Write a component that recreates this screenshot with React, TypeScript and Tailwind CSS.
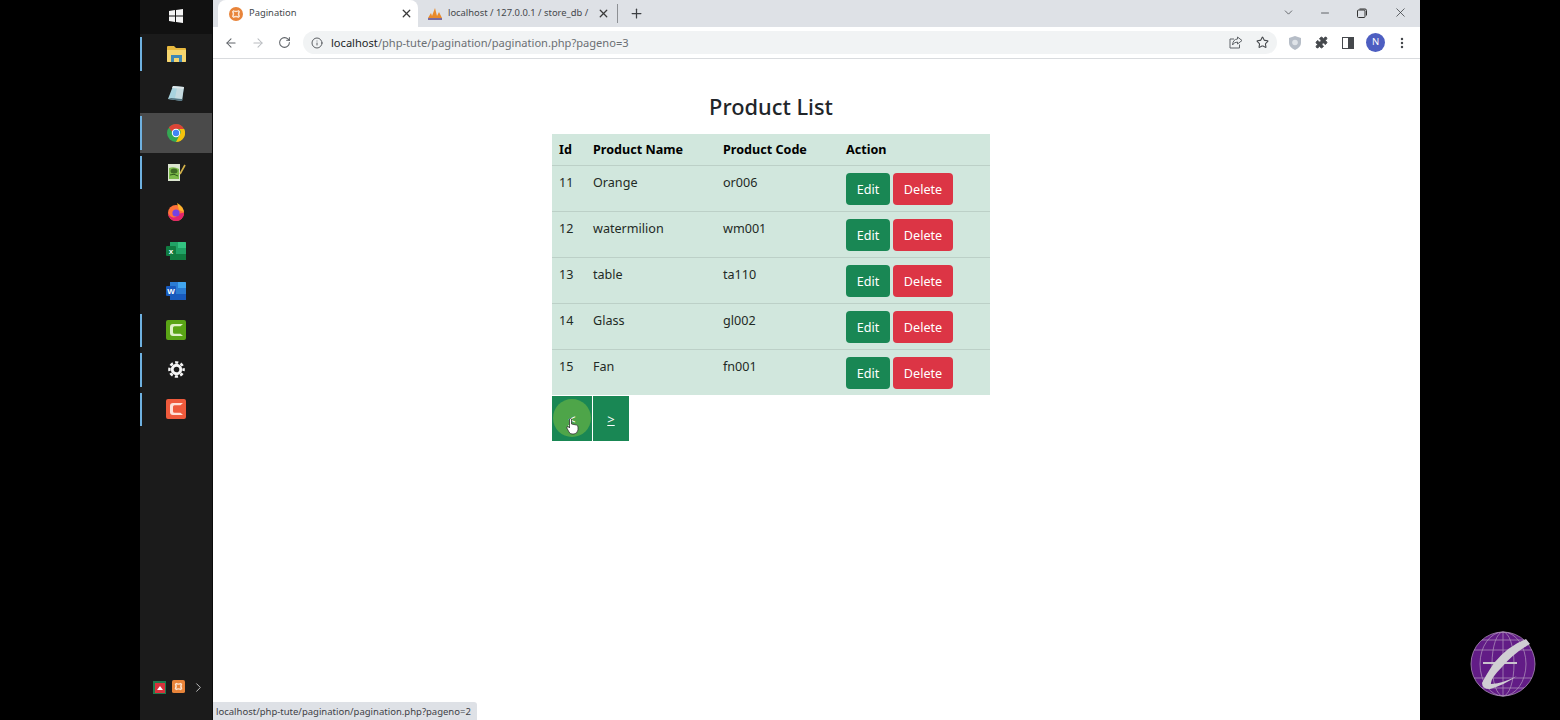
import React from "react";
import { ArrowLeft, ArrowRight, RotateCw, Info, X, Plus, ChevronDown, ChevronRight, Minus, Star, Puzzle, EllipsisVertical } from "lucide-react";

const products = [
  { id: 11, name: "Orange", code: "or006" },
  { id: 12, name: "watermilion", code: "wm001" },
  { id: 13, name: "table", code: "ta110" },
  { id: 14, name: "Glass", code: "gl002" },
  { id: 15, name: "Fan", code: "fn001" },
];

function WindowsLogo() {
  return (
    <svg width="14" height="14" viewBox="0 0 14 14" fill="#f4f4f4">
      <path d="M0 2 L6 1.1 V6.600 H0 Z M7 1 L14 0 V6.600 H7 Z M0 7.400 H6 V12.900 L0 12 Z M7 7.400 H14 V14 L7 13 Z" />
    </svg>
  );
}

function FolderIcon() {
  return (
    <svg width="19" height="16" viewBox="0 0 19 16">
      <path d="M0 1 Q0 0 1 0 H7 L9 2 H18 Q19 2 19 3 V15 Q19 16 18 16 H1 Q0 16 0 15 Z" fill="#e8b93f" />
      <path d="M0 4 H19 V15 Q19 16 18 16 H1 Q0 16 0 15 Z" fill="#f6d66f" />
      <path d="M4 9 H15 V16 H12 V12 H7 V16 H4 Z" fill="#3f88b5" />
    </svg>
  );
}

function NotepadIcon() {
  return (
    <svg width="18" height="18" viewBox="0 0 18 18" className="mt-[1px]">
      <path d="M6 1 L17 2 L15 16 L1 14 Z" fill="#a9d3de" />
      <path d="M6 1 L17 2 L16.500 4 L5 3 Z" fill="#dfe7ea" />
      <path d="M15 16 L1 14 L4 13 L15.500 14 Z" fill="#54727e" />
      <path d="M10 3 L16.500 4 L15 14 L8 13 Z" fill="#d3dde0" opacity="0.7" />
    </svg>
  );
}

function ChromeIcon() {
  return (
    <svg width="18" height="18" viewBox="0 0 18 18">
      <circle cx="9" cy="9" r="9" fill="#34a853" />
      <path d="M9 0 A9 9 0 0 1 17 5 H9 A4 4 0 0 0 5.200 8 L1.800 3.600 A9 9 0 0 1 9 0 Z" fill="#db4437" />
      <path d="M17.200 5 A9 9 0 0 1 9 18 L12.500 11 A4 4 0 0 0 12.200 5 Z" fill="#f4c20d" />
      <circle cx="9" cy="9" r="4.200" fill="#fff" />
      <circle cx="9" cy="9" r="3.200" fill="#4285f4" />
    </svg>
  );
}

function EditorIcon() {
  return (
    <svg width="19" height="19" viewBox="0 0 19 19">
      <path d="M1 1 H13 V18 H1 Z" fill="#dbe5cf" />
      <path d="M2 5 Q7 3 12 6 V16 H2 Z" fill="#7dbb4a" />
      <ellipse cx="7" cy="8" rx="3.500" ry="2.500" fill="#3f6b25" />
      <path d="M3 12 Q7 10 11 13" stroke="#2f5a1a" strokeWidth="1" fill="none" />
      <path d="M13 11 L18 2" stroke="#d3b24a" strokeWidth="1.600" />
    </svg>
  );
}

function FirefoxIcon() {
  return (
    <svg width="18" height="18" viewBox="0 0 18 18">
      <circle cx="9" cy="10" r="8" fill="#ff7139" />
      <path d="M1 10 A8 8 0 0 0 17 10 A8 8 0 0 0 9 14 A6 6 0 0 1 1 10 Z" fill="#e3236f" />
      <path d="M10 0 Q16 3 17 9 L12 7 Z" fill="#ffb32c" />
      <circle cx="9" cy="10" r="3.600" fill="#7542e5" />
    </svg>
  );
}

function OfficeIcon({ letter, dark, mid, light }: { letter: string; dark: string; mid: string; light: string }) {
  return (
    <svg width="20" height="18" viewBox="0 0 20 18">
      <path d="M4 0 H19 Q20 0 20 1 V17 Q20 18 19 18 H5 Q4 18 4 17 Z" fill={mid} />
      <path d="M12 0 H19 Q20 0 20 1 V6 H12 Z" fill={light} />
      <path d="M4 12 H20 V17 Q20 18 19 18 H5 Q4 18 4 17 Z" fill={dark} />
      <rect x="0" y="4" width="10" height="10" rx="1" fill={dark} />
      <text x="5" y="12" textAnchor="middle" fontSize="8" fontWeight="700" fill="#fff" fontFamily="Liberation Sans">{letter}</text>
    </svg>
  );
}

function CamtasiaIcon({ bg, line }: { bg: string; line: string }) {
  return (
    <svg width="20" height="20" viewBox="0 0 20 20">
      <rect width="20" height="20" rx="2" fill={bg} />
      <path d="M17 4 H7 Q4 4 4 7 V13 Q4 16 7 16 H17 L14.500 13.800 H8.500 Q7 13.800 7 12.300 V7.700 Q7 6.200 8.500 6.200 H14.500 Z" fill={line} />
    </svg>
  );
}

function GearIcon() {
  return (
    <svg width="17" height="17" viewBox="0 0 18 18" fill="none" stroke="#f5f5f5">
      <circle cx="9" cy="9" r="4.500" strokeWidth="3" />
      <circle cx="9" cy="9" r="7.500" strokeWidth="2.600" strokeDasharray="3.400 2.490" strokeDashoffset="1.700" />
    </svg>
  );
}

function XamppIcon({ size = 14, round }: { size?: number; round?: boolean }) {
  return (
    <svg width={size} height={size} viewBox="0 0 14 14">
      {round ? <circle cx="7" cy="7" r="7" fill="#e8843a" /> : <rect width="14" height="14" rx="2" fill="#e8843a" />}
      <path d="M4 3.500 Q7 5.500 10 3.500 M4 10.500 Q7 8.500 10 10.500 M3.500 4 Q5.500 7 3.500 10 M10.500 4 Q8.500 7 10.500 10" fill="none" stroke="#fbe5d2" strokeWidth="1.400" />
    </svg>
  );
}

function PmaIcon() {
  return (
    <svg width="14" height="12" viewBox="0 0 14 12">
      <path d="M0 10 L3 5 L4 8 L7 0 L9 8 L11 4 L14 10 Z" fill="#e98a2c" />
      <rect x="0" y="10" width="14" height="2" fill="#7a6a9c" />
    </svg>
  );
}

function DockItem({ children, bar, active }: { children: React.ReactNode; bar?: boolean; active?: boolean }) {
  return (
    <div className={`h-[39.5px] flex items-center justify-center relative ${active ? "bg-[#4a4a4a]" : ""}`}>
      {bar && <div className="absolute left-0 top-[3px] bottom-[3px] w-[2px] bg-[#6fb1e0]" />}
      {children}
    </div>
  );
}

function Dock() {
  return (
    <div className="w-[73px] h-full bg-[#1b1b1b] flex flex-col shrink-0 border-r border-[#0c0c0c]">
      <div className="h-[34px] flex items-center justify-center bg-[#111111] pb-[2px]">
        <WindowsLogo />
      </div>
      <DockItem bar><FolderIcon /></DockItem>
      <DockItem><NotepadIcon /></DockItem>
      <DockItem bar active><ChromeIcon /></DockItem>
      <DockItem bar><EditorIcon /></DockItem>
      <DockItem><FirefoxIcon /></DockItem>
      <DockItem><OfficeIcon letter="x" dark="#107c41" mid="#21a366" light="#33c481" /></DockItem>
      <DockItem><OfficeIcon letter="W" dark="#185abd" mid="#2b7cd3" light="#41a5ee" /></DockItem>
      <DockItem bar><CamtasiaIcon bg="#5aa516" line="#dff0c8" /></DockItem>
      <DockItem bar><GearIcon /></DockItem>
      <DockItem bar><CamtasiaIcon bg="#ee5a3c" line="#fde0d8" /></DockItem>
      <div className="flex-1" />
      <div className="h-[40px] flex items-start justify-end pr-[6px] gap-[6px] text-[#c8c8c8]">
        <div className="w-[13px] h-[13px] mt-[1px] bg-[#1f7a4d] flex items-center justify-center">
          <div className="w-[10px] h-[10px] bg-[#d8323c] flex items-center justify-center">
            <div className="w-0 h-0 border-x-[3px] border-x-transparent border-b-[4px] border-b-white" />
          </div>
        </div>
        <XamppIcon size={13} />
        <ChevronRight size={15} strokeWidth={1.5} />
      </div>
    </div>
  );
}

function TabBar() {
  return (
    <div className="h-[27px] bg-[#dee1e6] flex items-end pl-[5px] text-[9.4px] text-[#45484c] shrink-0">
      <div className="w-[200px] h-[27px] bg-white rounded-t-[8px] flex items-center pl-[11px] pr-[5px]">
        <XamppIcon round />
        <span className="ml-[6px] flex-1">Pagination</span>
        <X size={13} strokeWidth={2.4} className="text-[#3a3a3a]" />
      </div>
      <div className="w-[208px] h-[27px] flex items-center pl-[10px] pr-[8px]">
        <PmaIcon />
        <span className="ml-[6px] flex-1 overflow-hidden whitespace-nowrap">localhost / 127.0.0.1 / store_db /</span>
        <X size={13} strokeWidth={2.4} className="text-[#3a3a3a]" />
        <div className="w-px h-[19px] bg-[#8d9094] ml-[7px]" />
      </div>
      <div className="h-[27px] flex items-center pl-[3px]">
        <Plus size={15} strokeWidth={2} className="text-[#3c3f43]" />
      </div>
      <div className="flex-1" />
      <div className="h-[27px] flex items-center pr-[12px] pb-[2px] text-[#36393d]">
        <ChevronDown size={13} strokeWidth={1.3} />
        <Minus size={12} strokeWidth={1.5} className="ml-[24px]" />
        <svg width="10" height="10" viewBox="0 0 10 10" fill="none" stroke="#333" className="ml-[26px]">
          <rect x="0.500" y="2" width="7.500" height="7.500" rx="1" />
          <path d="M2.500 1 H8 Q9.500 1 9.500 2.500 V7.500" />
        </svg>
        <X size={15} strokeWidth={1.2} className="ml-[26px]" />
      </div>
    </div>
  );
}

function Toolbar() {
  return (
    <div className="h-[32px] bg-white border-b border-[#d9dbde] flex items-center pl-[11px] pr-[11px] shrink-0 text-[#5f6368]">
      <ArrowLeft size={14} strokeWidth={1.8} />
      <ArrowRight size={14} strokeWidth={1.8} className="ml-[13px] text-[#b9bcc0]" />
      <RotateCw size={13} strokeWidth={1.9} className="ml-[13px]" />
      <div className="ml-[12px] w-[974px] h-[23px] rounded-full bg-[#f1f3f4] flex items-center pl-[8px] pr-[8px]">
        <Info size={12} strokeWidth={1.8} className="text-[#4c4f53]" />
        <span className="ml-[8px] pt-[1px] text-[11.1px] text-[#6b6f73] flex-1 whitespace-nowrap">
          <span className="text-[#222426]">localhost</span>/php-tute/pagination/pagination.php?pageno=3
        </span>
        <svg width="14" height="13" viewBox="0 0 14 13" fill="none" stroke="#5f6368" strokeWidth="1">
          <path d="M5 3 H1 V12 H10.500 V8.500" />
          <path d="M8.500 1 L13 4.500 L8.500 8 V6 Q5 6 3.500 9 Q4 3.200 8.500 3 Z" />
        </svg>
        <Star size={13} strokeWidth={2} className="ml-[13px] text-[#45484c]" />
      </div>
      <svg width="12" height="14" viewBox="0 0 12 14" className="ml-[12px]">
        <path d="M6 0 L12 2 V7 Q12 11 6 14 Q0 11 0 7 V2 Z" fill="#b6bdc7" />
        <circle cx="6" cy="6.500" r="2.800" fill="#dfe3e8" />
      </svg>
      <Puzzle size={13} fill="#45484c" strokeWidth={1.5} className="ml-[14px] text-[#45484c]" />
      <div className="ml-[14px] w-[12px] h-[12px] border-[1.5px] border-[#45484c] flex justify-end">
        <div className="w-[5px] h-full bg-[#45484c]" />
      </div>
      <div className="ml-[12px] w-[19px] h-[19px] rounded-full bg-[#4d5ec1] text-white text-[9.5px] flex items-center justify-center">N</div>
      <EllipsisVertical size={14} strokeWidth={2.2} className="ml-[10px] text-[#45484c]" />
    </div>
  );
}

function ProductTable() {
  return (
    <table className="w-[438px] border-collapse bg-[#d1e7dd] text-[12.6px] text-[#1f2a25] table-fixed">
      <thead>
        <tr className="h-[31px] border-b border-[#bcd0c7] text-black font-bold text-left">
          <th className="w-[41px] pl-[7px] pt-[3px]">Id</th>
          <th className="w-[130px] pt-[3px]">Product Name</th>
          <th className="w-[123px] pt-[3px]">Product Code</th>
          <th className="pt-[3px]">Action</th>
        </tr>
      </thead>
      <tbody>
        {products.map((p, i) => (
          <tr key={p.id} className={`h-[46px] align-top ${i < 4 ? "border-b border-[#bcd0c7]" : ""}`}>
            <td className="pl-[7px] pt-[8px]">{p.id}</td>
            <td className="pt-[8px]">{p.name}</td>
            <td className="pt-[8px]">{p.code}</td>
            <td className="pt-[7px]">
              <div className="flex gap-[3px]">
                <button className="w-[44px] h-[32px] pt-[3px] rounded-[4px] bg-[#198754] text-white">Edit</button>
                <button className="w-[60px] h-[32px] pt-[3px] rounded-[4px] bg-[#dc3545] text-white">Delete</button>
              </div>
            </td>
          </tr>
        ))}
      </tbody>
    </table>
  );
}

function Pager() {
  return (
    <div className="flex gap-px text-[13px] text-white h-[45px] mt-px">
      <div className="w-[40px] pt-[2px] bg-[#198754] flex items-center justify-center relative">
        <div className="absolute left-[1px] top-[3px] w-[38px] h-[38px] rounded-full bg-[#4ea549]" />
        <span className="relative underline">&lt;</span>
        <svg width="13" height="17" viewBox="0 0 13 17" className="absolute left-[14px] top-[22px]">
          <path d="M3.500 1 Q5 0 5.500 1 V6 L10.500 7 Q12 7.500 12 9 V12 Q11 16 8 16 H6 Q4 16 3 14 L0.800 10 Q0.500 8.500 2 8.500 L3.500 10 Z" fill="#fff" stroke="#333" strokeWidth="0.800" />
        </svg>
      </div>
      <div className="w-[36px] pt-[2px] bg-[#198754] flex items-center justify-center">
        <span className="underline">&gt;</span>
      </div>
    </div>
  );
}

function Page() {
  return (
    <div className="flex-1 bg-white flex flex-col items-start font-['Noto_Sans','Open_Sans',sans-serif] relative">
      <div className="w-[438px] ml-[339px] pt-[31px]">
        <h1 className="text-center text-[21.8px] leading-[33px] font-medium text-[#212529] mb-[11px]">Product List</h1>
        <ProductTable />
        <Pager />
      </div>
      <div className="absolute left-0 bottom-0 h-[18px] w-[264px] pt-[2px] bg-[#dee1e6] rounded-tr-[3px] pl-[3px] flex items-center text-[9.5px] text-[#3e4246] whitespace-nowrap">
        localhost/php-tute/pagination/pagination.php?pageno=2
      </div>
    </div>
  );
}

function Globe() {
  return (
    <svg width="66" height="66" viewBox="0 0 66 66" className="absolute left-[1470px] top-[631px]">
      <circle cx="33" cy="33" r="32" fill="#621c86" />
      <g fill="none" stroke="#a98bb8" strokeWidth="0.800">
        <circle cx="33" cy="33" r="32" />
        <ellipse cx="33" cy="33" rx="11" ry="32" />
        <ellipse cx="33" cy="33" rx="23" ry="32" />
        <path d="M33 1 V65 M4 19 H62 M4 47 H62 M12 9 H54 M12 57 H54" />
      </g>
      <path d="M13 32 H47" stroke="#c9c3cd" strokeWidth="2" />
      <path d="M56 8 L60 13 Q44 22 32 36 Q20 48 21 53 Q34 52 47 45 Q34 54 20 58 Q12 58 12 52 Q16 44 24 32 Q38 15 56 8 Z" fill="#d0ced3" />
    </svg>
  );
}

export default function App() {
  return (
    <div className="w-[1560px] h-[720px] bg-black flex relative overflow-hidden font-['Noto_Sans',sans-serif]">
      <div className="w-[140px] shrink-0" />
      <Dock />
      <div className="w-[1207px] h-full flex flex-col shrink-0">
        <TabBar />
        <Toolbar />
        <Page />
      </div>
      <Globe />
    </div>
  );
}
